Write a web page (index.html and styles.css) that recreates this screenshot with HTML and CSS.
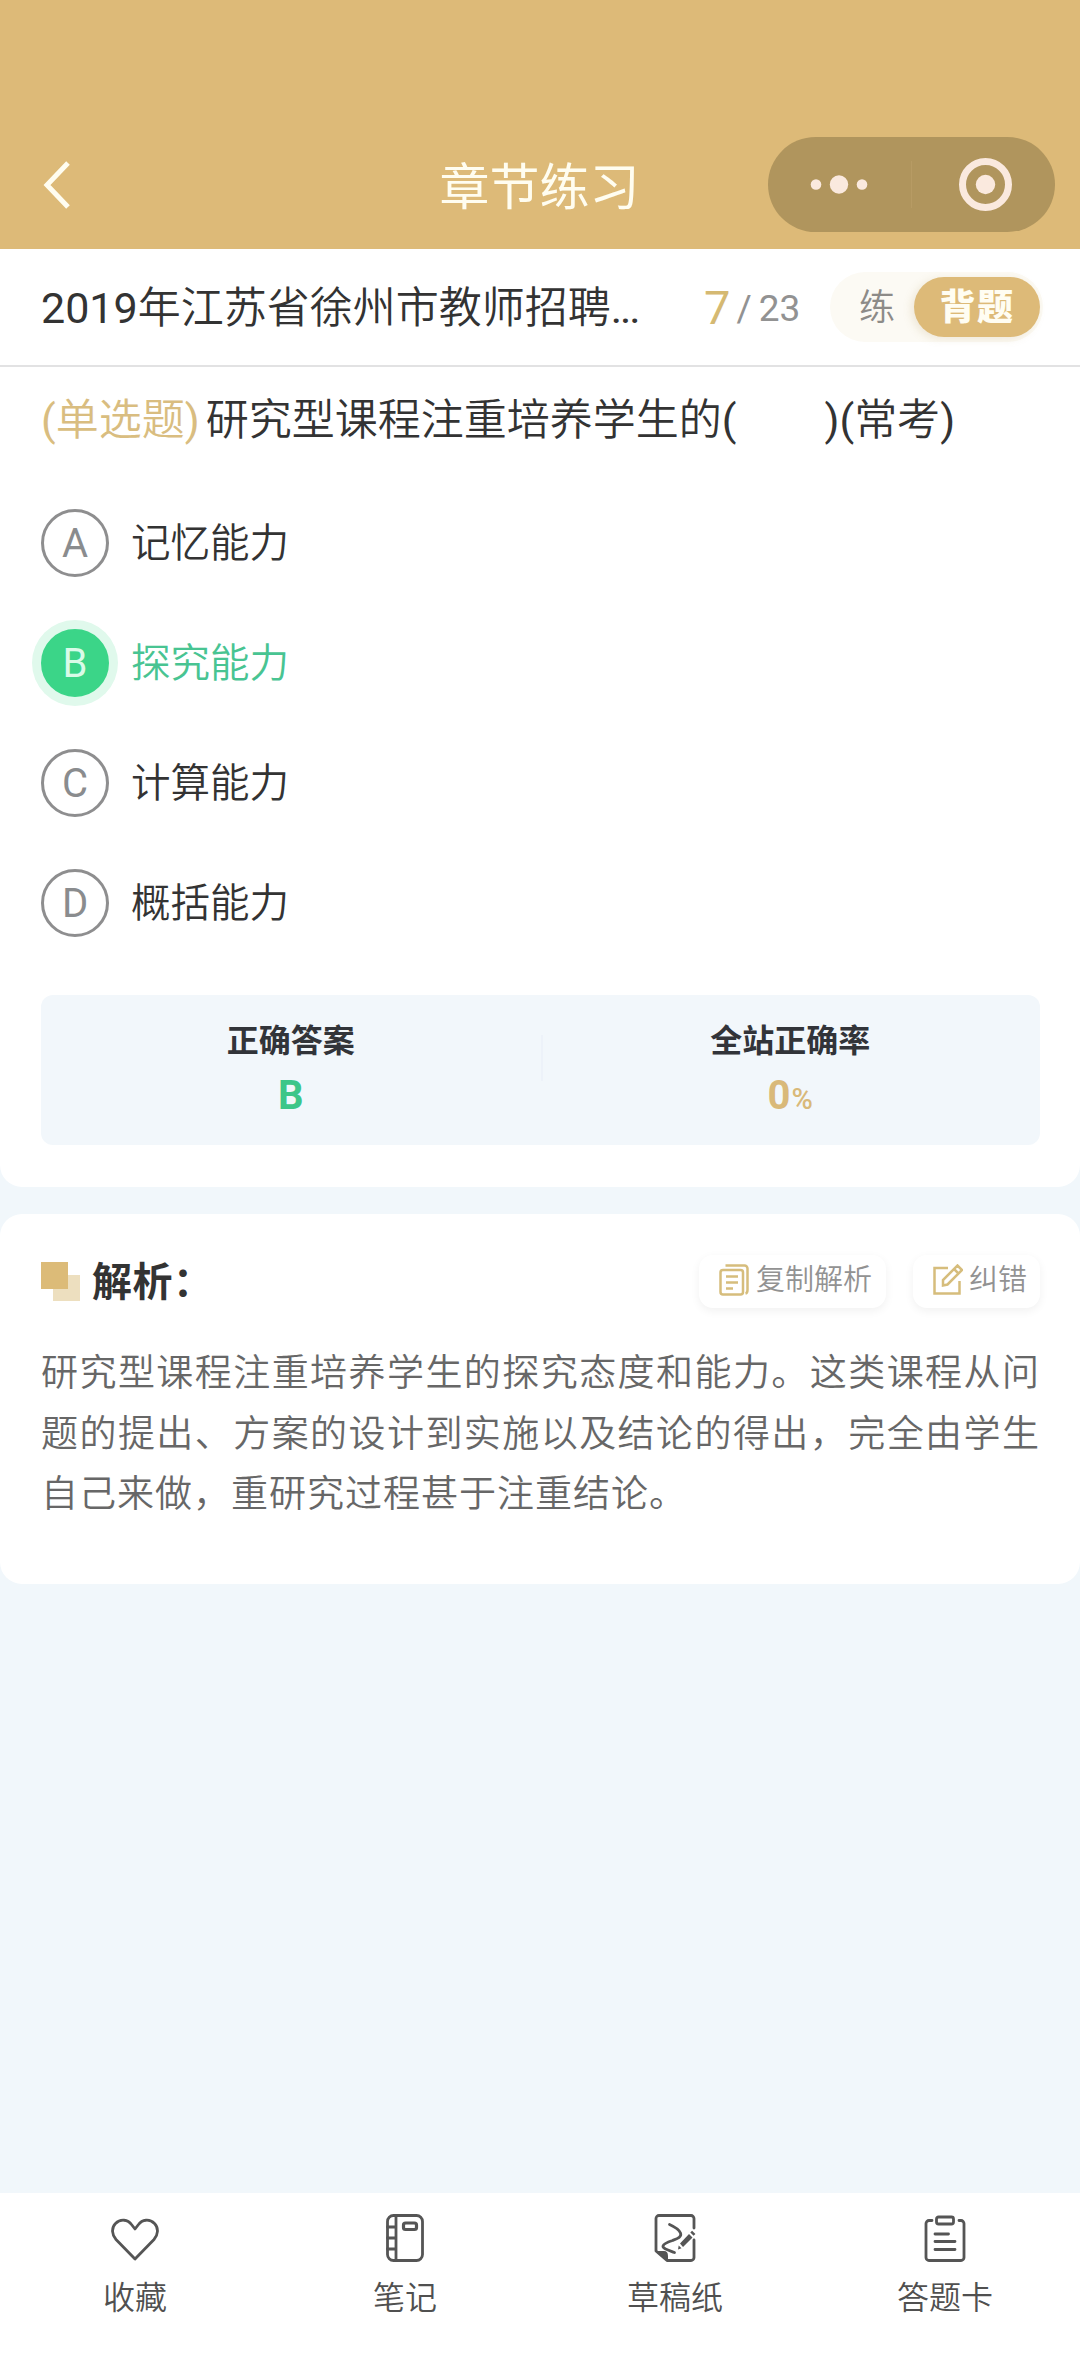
FILE: index.html
```html
<!DOCTYPE html>
<html lang="zh-CN">
<head>
<meta charset="utf-8">
<title>章节练习</title>
<link rel="stylesheet" href="styles.css">
</head>
<body>
<div class="app">
  <header class="navbar">
    <svg class="back" width="30" height="50" viewBox="0 0 30 50"><path d="M26 3 5 25l21 22"/></svg>
    <h1 class="navbar-title">章节练习</h1>
    <svg class="capsule" width="287" height="95" viewBox="0 0 287 95">
      <rect class="capsule-bg" width="287" height="95" rx="47.5"/>
      <g class="capsule-ink"><circle cx="48" cy="47.500" r="5.300"/><circle cx="71" cy="47.500" r="9.200"/><circle cx="94" cy="47.500" r="5.300"/><circle cx="217.500" cy="47.500" r="9.700"/></g>
      <path class="capsule-line" d="M143.500 24v47"/>
      <circle class="capsule-ring" cx="217.500" cy="47.500" r="23"/>
    </svg>
  </header>

  <main>
    <section class="panel question">
      <div class="meta">
        <span class="paper"><span class="latin">2019</span>年江苏省徐州市教师招聘<span class="latin dots">...</span></span>
        <span class="progress latin"><b class="current">7</b><span class="slash">/</span><span>23</span></span>
        <div class="mode"><span class="mode-item">练</span><span class="mode-item mode-active">背题</span></div>
      </div>
      <p class="stem"><span class="kind"><span class="latin">(</span>单选题<span class="latin">)</span></span><span>研究型课程注重培养学生的<span class="latin">(</span></span><span class="blank"></span><span><span class="latin">)(</span>常考<span class="latin">)</span></span></p>
      <ul class="options">
        <li class="option"><span class="badge">A</span>记忆能力</li>
        <li class="option correct"><span class="badge">B</span>探究能力</li>
        <li class="option"><span class="badge">C</span>计算能力</li>
        <li class="option"><span class="badge">D</span>概括能力</li>
      </ul>
      <div class="result">
        <div class="stat"><span class="stat-label">正确答案</span><span class="stat-value answer">B</span></div>
        <div class="stat"><span class="stat-label">全站正确率</span><span class="stat-value rate">0<small class="unit">%</small></span></div>
      </div>
    </section>

    <section class="panel analysis">
      <div class="analysis-head">
        <svg class="mark" width="39" height="39" viewBox="0 0 39 39"><path class="mark-light" d="M12 13h27v26H12z"/><path class="mark-dark" d="M0 0h27v27H0z"/></svg>
        <h2 class="analysis-title">解析：</h2>
        <button class="chip copy"><svg width="30" height="32" viewBox="0 0 30 32"><rect x="1.500" y="6" width="22.500" height="24.500" rx="2.500"/><path d="M6.500 1.500h19a3 3 0 0 1 3 3v21.500q0 3-2 3.500M7 12.500h12M7 18.500h12M7 24.500h7"/></svg><span class="chip-text">复制解析</span></button>
        <button class="chip fix"><svg width="30" height="32" viewBox="0 0 30 32"><path d="M15 4H1.500v25.500h25V17M10 21.500v-5.500L24.500 1.500l4.500 4.500L14.500 20.500zM21 5l4.500 4.500"/></svg><span class="chip-text">纠错</span></button>
      </div>
      <p class="analysis-text">研究型课程注重培养学生的探究态度和能力。这类课程从问题的提出、方案的设计到实施以及结论的得出，完全由学生自己来做，重研究过程甚于注重结论。</p>
    </section>
  </main>

  <nav class="tabs">
    <a class="tab"><svg width="48" height="50" viewBox="0 0 48 50"><path d="M24 46 5 26.500C1 22 0 15 4.500 10.500c5-5 12.500-4 16 1L24 16l3.500-4.500c3.500-5 11-6 16-1C48 15 47 22 43 26.500z"/></svg>收藏</a>
    <a class="tab"><svg width="48" height="50" viewBox="0 0 48 50"><rect x="6.500" y="2.500" width="35" height="45" rx="6"/><path d="M15 2.500v45M6.500 14H15M6.500 25H15M6.500 36H15"/><rect class="thick" x="22.500" y="10" width="13" height="6.500" rx="2"/></svg>笔记</a>
    <a class="tab"><svg width="48" height="50" viewBox="0 0 48 50"><path d="M43 15V5.500a3 3 0 0 0-3-3H8a3 3 0 0 0-3 3V38l11 9.500h24a3 3 0 0 0 3-3V27"/><path class="solid" d="M4 38h9q4 0 4 5v5z"/><path d="M18.500 11.500q9 4 11 8.500c1.500 4-3 5.500-8 7.500-6 2-9 3.500-9.500 5.500-.5 2.500 5 4 11.500 6.500"/><path class="solid" d="m29 30.500 9-9.500 3.500 3.500-9.500 9.500zM39.300 19.500l1.800-1.800 3.300 3.300-1.800 1.800zM27.700 32.500l2.800 2.800-3.500 1.200z"/></svg>草稿纸</a>
    <a class="tab"><svg width="48" height="50" viewBox="0 0 48 50"><path d="M11 7.500H8a3 3 0 0 0-3 3v34a3 3 0 0 0 3 3h32a3 3 0 0 0 3-3v-34a3 3 0 0 0-3-3h-2M14 21h13.500M14 28.500h20M14 36.500h20"/><rect x="15.500" y="4" width="17" height="7" rx="2"/></svg>答题卡</a>
  </nav>
</div>
</body>
</html>
```
FILE: styles.css
```css
* { box-sizing: border-box; margin: 0; padding: 0; }

:root {
  --gold: #ddba78;
  --page: #f1f7fb;
  --ink: #333;
  --green: #3bd588;
}

body {
  background: var(--page);
  color: var(--ink);
  font-family: Roboto, "Noto Sans CJK SC", sans-serif;
  font-weight: 350;
}

.app { display: flex; flex-direction: column; height: 2376px; }
main { flex: 1; }
svg { display: block; fill: none; }
.latin { font-weight: 400; }

/* Navigation bar */
.navbar {
  display: grid;
  grid-template-columns: 1fr auto 1fr;
  align-items: center;
  height: 249px;
  padding: 120px 25px 0 42px;
  background: var(--gold);
}
.navbar-title { padding-top: 6px; font-size: 50px; font-weight: 400; line-height: 60px; color: #fffdf0; transform: translateX(-9px); }
.back { stroke: #fffdf0; stroke-width: 5; }
.capsule { justify-self: end; }
.capsule-bg { fill: #b0955d; }
.capsule-ink { fill: #fae9de; }
.capsule-line { stroke: #b79b64; stroke-width: 1; }
.capsule-ring { stroke: #fae9de; stroke-width: 7; }

.panel { background: #fff; }

/* Question */
.question { height: 938px; border-radius: 0 0 22px 22px; }
.meta {
  display: flex;
  align-items: center;
  height: 118px;
  padding: 0 36px 0 41px;
  border-bottom: 2px solid #e2e2e3;
}
.paper { width: 663px; padding-top: 2px; font-size: 43px; line-height: 60px; white-space: nowrap; }
.dots { letter-spacing: -2px; }
.progress { display: flex; align-items: baseline; width: 126px; font-size: 37px; line-height: 60px; color: #929292; }
.current { font-size: 47px; font-weight: 400; line-height: 60px; color: #d5b972; transform: translateY(3px); }
.slash { margin: 0 7px 0 6px; }
.mode {
  display: flex;
  align-items: center;
  width: 213px;
  height: 70px;
  padding: 0 3px 0 29px;
  border-radius: 35px;
  background: #fcfaf4;
}
.mode-item { padding-top: 2px; font-size: 36px; line-height: 58px; color: #8d8b88; }
.mode-active {
  width: 126px;
  margin-left: auto;
  border-radius: 30px;
  background: var(--gold);
  box-shadow: -3px 2px 8px rgba(180, 150, 90, .18);
  color: #fffdf2;
  font-weight: 900;
  letter-spacing: 1.5px;
  text-align: center;
}
.stem { display: flex; padding: 22px 41px 0; font-size: 43px; line-height: 62px; white-space: nowrap; }
.kind { margin-right: 6px; color: #d9bd80; }
.blank { width: 88px; }
.options { display: flex; flex-direction: column; gap: 52px; padding: 58px 41px 0; list-style: none; }
.option { display: flex; align-items: center; gap: 22px; height: 68px; font-size: 39.500px; line-height: 71px; }
.badge {
  width: 68px;
  height: 68px;
  border: 3px solid #8e8e8f;
  border-radius: 50%;
  color: #8a8c8e;
  font-size: 40px;
  font-weight: 400;
  line-height: 63px;
  text-align: center;
}
.correct { color: #48c492; }
.correct .badge { border-color: var(--green); background: var(--green); box-shadow: 0 0 0 9px #e0f9ec; color: #d9fbe8; }

.result {
  display: flex;
  height: 150px;
  margin: 58px 40px 0 41px;
  padding-top: 25px;
  border-radius: 12px;
  background: #f2f7fb;
}
.stat { display: flex; flex: 1; flex-direction: column; align-items: center; }
.stat + .stat { background: linear-gradient(#edf2f9, #edf2f9) 0 15px / 2px 46px no-repeat; }
.stat-label { font-size: 32px; font-weight: 700; line-height: 42px; color: #323439; }
.stat-value { font-size: 40px; font-weight: 700; line-height: 50px; margin-top: 9px; }
.answer { color: #3dc689; }
.rate { color: #d9b979; }
.unit { margin-left: 1px; font-size: 29px; font-weight: 500; }

/* Analysis */
.analysis { height: 370px; margin-top: 27px; padding: 41px 40px 0 41px; border-radius: 22px; }
.analysis-head { display: flex; align-items: center; height: 53px; }
.mark-dark { fill: #dcbb78; }
.mark-light { fill: #eddfbf; }
.analysis-title { margin: 0 auto 0 12px; padding-top: 1px; font-size: 40px; line-height: 53px; letter-spacing: .5px; }
.chip {
  display: flex;
  align-items: center;
  height: 53px;
  border: 0;
  border-radius: 14px;
  background: #fff;
  box-shadow: 0 3px 10px rgba(0, 0, 0, .06);
  color: #929292;
  font: inherit;
  font-size: 29px;
}
.chip svg { stroke: #d6bd7c; stroke-width: 2.500; }
.chip-text { line-height: 46px; }
.copy { width: 187px; padding: 0 0 4px 20px; gap: 7px; }
.fix { width: 127px; margin-left: 27px; padding: 0 0 4px 20px; gap: 6px; }
.analysis-text {
  margin-top: 36px;
  color: #676767;
  font-size: 37px;
  letter-spacing: 1px;
  line-height: 60.500px;
  text-align: justify;
}

/* Bottom tabs */
.tabs { display: grid; grid-template-columns: repeat(4, 1fr); height: 183px; background: #fff; }
.tab { display: flex; flex-direction: column; align-items: center; padding-top: 20px; color: #505050; font-size: 32px; line-height: 44px; }
.tab svg { margin-bottom: 13px; stroke: #555; stroke-width: 2.800; stroke-linejoin: round; stroke-linecap: round; }
.tab .solid { fill: #555; stroke: none; }
.tab .thick { stroke-width: 3.200; }
```
